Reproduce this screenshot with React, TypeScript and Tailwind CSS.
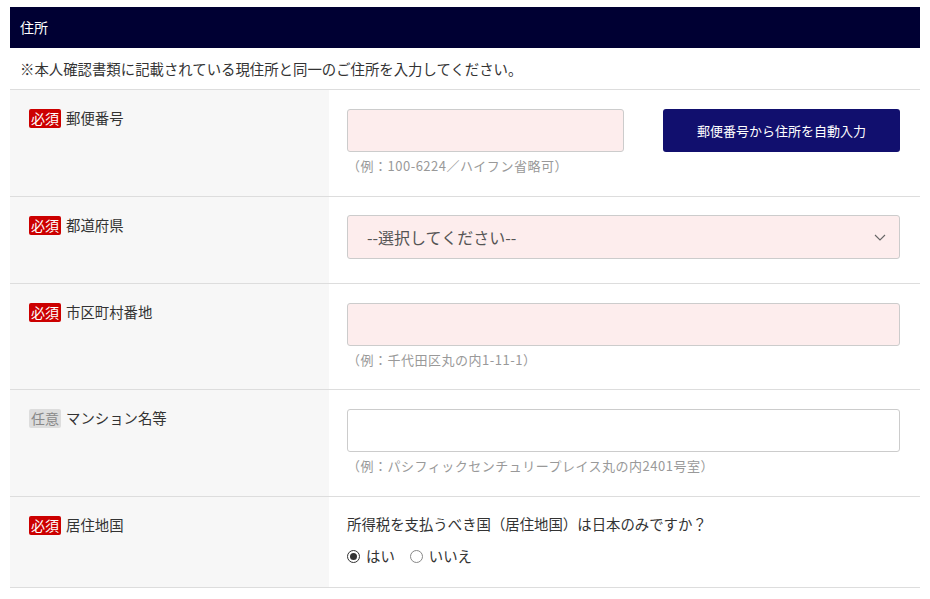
import type { ReactNode } from 'react'

const font = { fontFamily: '"Noto Sans CJK JP", "Noto Sans", sans-serif' }

function Badge({ required }: { required: boolean }) {
  return required ? (
    <span className="inline-flex h-[19px] items-center rounded-[2px] bg-[#cc0000] px-[2px] text-[14px] leading-none text-white">
      必須
    </span>
  ) : (
    <span className="inline-flex h-[19px] items-center rounded-[2px] bg-[#dddddd] px-[2px] text-[14px] leading-none text-[#888]">
      任意
    </span>
  )
}

function Row({
  label,
  required = true,
  children,
  className = 'pt-[19px] pb-[19px]'
}: {
  label: string
  required?: boolean
  children: ReactNode
  className?: string
}) {
  return (
    <div className="flex border-b border-[#dddddd]">
      <div className="w-[319px] shrink-0 bg-[#f7f7f7] pl-[19px] pt-[18px]">
        <div className="flex items-center gap-[5px] text-[14.4px] leading-[20px] text-[#333]">
          <Badge required={required} />
          <span>{label}</span>
        </div>
      </div>
      <div className={`flex-1 pl-[18px] pr-[20px] ${className}`}>{children}</div>
    </div>
  )
}

function Hint({ children }: { children: ReactNode }) {
  return <p className="mt-[4px] text-[13px] leading-[20px] tracking-[0.5px] text-[#999]">{children}</p>
}

function Radio({ checked, label }: { checked?: boolean; label: string }) {
  return (
    <label className="flex items-center gap-[6px]">
      <span
        className={`flex h-[13px] w-[13px] items-center justify-center rounded-full border ${
          checked ? 'border-[#333]' : 'border-[#888]'
        }`}
      >
        {checked && <span className="h-[7px] w-[7px] rounded-full bg-[#333]" />}
      </span>
      <span>{label}</span>
    </label>
  )
}

export default function App() {
  return (
    <div className="min-h-[599px] bg-white px-[10px] pt-[7px]" style={font}>
      <div className="flex h-[41px] items-center bg-[#000033] px-[10px] text-[14px] text-white">住所</div>
      <p className="border-b border-[#dddddd] px-[10px] pt-[10px] pb-[10px] text-[14.4px] leading-[21px] text-[#333]">
        ※本人確認書類に記載されている現住所と同一のご住所を入力してください。
      </p>

      <Row label="郵便番号" className="pt-[19px] pb-[20px]">
        <div className="flex items-start">
          <input className="h-[43px] w-[277px] rounded-[3px] border border-[#cccccc] bg-[#fdeded] outline-none" />
          <button className="ml-auto h-[43px] w-[237px] rounded-[3px] bg-[#110f6e] text-[13px] text-white">
            郵便番号から住所を自動入力
          </button>
        </div>
        <Hint>（例：100-6224／ハイフン省略可）</Hint>
      </Row>

      <Row label="都道府県" className="pt-[18px] pb-[24px]">
        <div className="flex h-[44px] items-center justify-between rounded-[3px] border border-[#cccccc] bg-[#fdeded] pl-[19px] pr-[13px] text-[16px] text-[#555]">
          <span>--選択してください--</span>
          <svg width="12" height="7" viewBox="0 0 12 7" fill="none" stroke="#666" strokeWidth="1.1">
            <path d="M1 1l5 5 5-5" />
          </svg>
        </div>
      </Row>

      <Row label="市区町村番地">
        <input className="block h-[43px] w-full rounded-[3px] border border-[#cccccc] bg-[#fdeded] outline-none" />
        <Hint>（例：千代田区丸の内1-11-1）</Hint>
      </Row>

      <Row label="マンション名等" required={false} className="pt-[19px] pb-[20px]">
        <input className="block h-[43px] w-full rounded-[3px] border border-[#cccccc] bg-white outline-none" />
        <Hint>（例：パシフィックセンチュリープレイス丸の内2401号室）</Hint>
      </Row>

      <Row label="居住地国" className="pt-[17px] pb-[21px]">
        <p className="text-[14.4px] leading-[20px] text-[#333]">所得税を支払うべき国（居住地国）は日本のみですか？</p>
        <div className="mt-[12px] flex items-center gap-[15px] text-[14.4px] leading-[20px] text-[#333]">
          <Radio checked label="はい" />
          <Radio label="いいえ" />
        </div>
      </Row>
    </div>
  )
}
